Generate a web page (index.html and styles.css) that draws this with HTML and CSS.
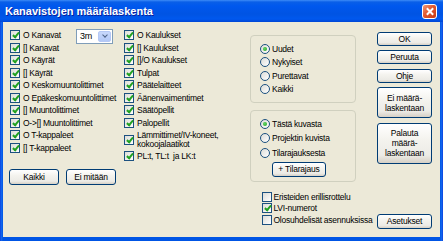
FILE: index.html
```html
<!DOCTYPE html>
<html lang="fi">
<head>
    <meta charset="UTF-8">
    <title>Kanavistojen määrälaskenta</title>
    <link rel="stylesheet" href="styles.css">
</head>
<body>
    <div class="window">
        <div class="titlebar">
            <span class="title">Kanavistojen määrälaskenta</span>
            <span class="close"></span>
        </div>
        <div class="client">
            <!-- left column: fittings -->
            <div class="col-left">
                <div class="list">
                    <div class="row">
                        <span class="lbl-fixed"><span class="box on"></span>O Kanavat</span>
                        <div class="combo"><span class="combo-text">3m</span><span class="drop"></span></div>
                    </div>
                    <div class="row"><span class="box on"></span>[] Kanavat</div>
                    <div class="row"><span class="box on"></span>O Käyrät</div>
                    <div class="row"><span class="box on"></span>[] Käyrät</div>
                    <div class="row"><span class="box on"></span>O Keskomuuntolittimet</div>
                    <div class="row"><span class="box on"></span>O Epäkeskomuuntolittimet</div>
                    <div class="row"><span class="box on"></span>[] Muuntolittimet</div>
                    <div class="row"><span class="box on"></span>O-&gt;[] Muuntolittimet</div>
                    <div class="row"><span class="box on"></span>O T-kappaleet</div>
                    <div class="row"><span class="box on"></span>[] T-kappaleet</div>
                </div>
                <div class="btnrow">
                    <button class="xp small">Kaikki</button>
                    <button class="xp small">Ei mitään</button>
                </div>
            </div>

            <!-- middle column: collars and terminals -->
            <div class="col-mid">
                <div class="row"><span class="box on"></span>O Kaulukset</div>
                <div class="row"><span class="box on"></span>[] Kaulukset</div>
                <div class="row"><span class="box on"></span>[]/O Kaulukset</div>
                <div class="row"><span class="box on"></span>Tulpat</div>
                <div class="row"><span class="box on"></span>Päätelaitteet</div>
                <div class="row"><span class="box on"></span>Äänenvaimentimet</div>
                <div class="row"><span class="box on"></span>Säätöpellit</div>
                <div class="row"><span class="box on"></span>Palopellit</div>
                <div class="row two"><span class="box on"></span><span>Lämmittimet/IV-koneet,<br>kokoojalaatikot</span></div>
                <div class="row"><span class="box on"></span>PL:t, TL:t &nbsp;ja LK:t</div>
            </div>

            <!-- options -->
            <div class="col-groups">
                <div class="group g1">
                    <div class="rrow"><span class="radio on"></span>Uudet</div>
                    <div class="rrow"><span class="radio"></span>Nykyiset</div>
                    <div class="rrow"><span class="radio"></span>Purettavat</div>
                    <div class="rrow"><span class="radio"></span>Kaikki</div>
                </div>
                <div class="group g2">
                    <div class="rrow"><span class="radio on"></span>Tästä kuvasta</div>
                    <div class="rrow"><span class="radio"></span>Projektin kuvista</div>
                    <div class="rrow"><span class="radio"></span>Tilarajauksesta</div>
                    <button class="xp tila">+ Tilarajaus</button>
                </div>
                <div class="checks">
                    <div class="crow"><span class="box"></span>Eristeiden erillisrottelu</div>
                    <div class="crow"><span class="box on"></span>LVI-numerot</div>
                    <div class="crow"><span class="box"></span>Olosuhdelisät asennuksissa</div>
                </div>
            </div>

            <!-- dialog buttons -->
            <div class="col-btns">
                <button class="xp b-ok">OK</button>
                <button class="xp b-one">Peruuta</button>
                <button class="xp b-one">Ohje</button>
                <button class="xp b-two">Ei määrä-<br>laskentaan</button>
                <button class="xp b-three">Palauta<br>määrä-<br>laskentaan</button>
                <button class="xp b-set">Asetukset</button>
            </div>
        </div>
    </div>
</body>
</html>
```

FILE: styles.css
```css
body {
    margin: 0;
    font-family: "Liberation Sans", Arial, sans-serif;
    font-size: 8.5px;
    letter-spacing: -0.25px;
    color: #000;
    background: #fff;
}

.window {
    width: 443px;
    height: 241px;
    display: flex;
    flex-direction: column;
    background: linear-gradient(to right, #0831d9 0, #166aee 1px, #0055e5 3px, #0055e5 440px, #166aee 442px, #0831d9 443px);
}

.titlebar {
    height: 22px;
    flex: none;
    display: flex;
    align-items: center;
    justify-content: space-between;
    padding: 0 6px 0 5px;
    background: linear-gradient(to bottom, #3d8cf7 0, #0a5fe8 2px, #0058ee 6px, #0054e3 14px, #0058ee 19px, #0046d5 22px);
}

.title {
    color: #fff;
    font-weight: bold;
    font-size: 11px;
    letter-spacing: 0;
    text-shadow: 1px 1px 0 #0a1f9c;
}

.close {
    width: 15px;
    height: 15px;
    box-sizing: border-box;
    border: 1px solid #fff;
    border-radius: 3px;
    background: linear-gradient(135deg, #f09a7a 0, #e2582f 45%, #c23a14 100%);
    position: relative;
}

.close::before,
.close::after {
    content: "";
    position: absolute;
    left: 5.5px;
    top: 2px;
    width: 2px;
    height: 9px;
    background: #fff;
    transform: rotate(45deg);
}

.close::after {
    transform: rotate(-45deg);
}

.client {
    flex: 1;
    margin: 0 3px 4px;
    background: #ece9d8;
    display: flex;
    padding: 7px 8px 8px 7px;
    box-sizing: border-box;
}

/* checkbox rows */
.col-left {
    width: 114px;
    flex: none;
    display: flex;
    flex-direction: column;
}

.col-mid {
    width: 126px;
    flex: none;
}

.row {
    height: 12.5px;
    display: flex;
    align-items: center;
    gap: 3px;
    white-space: nowrap;
}

.row.two {
    height: 21px;
    line-height: 9px;
}

.lbl-fixed {
    width: 63px;
    display: flex;
    align-items: center;
    gap: 3px;
}

.box {
    width: 10px;
    height: 10px;
    flex: none;
    box-sizing: border-box;
    border: 1px solid #1c5180;
    background: linear-gradient(135deg, #dcdcd7, #fff);
    position: relative;
}

.box.on::after {
    content: "";
    position: absolute;
    left: 2.5px;
    top: 0;
    width: 2px;
    height: 5px;
    border: solid #21a121;
    border-width: 0 2px 2px 0;
    transform: rotate(40deg);
}

.combo {
    width: 37px;
    height: 15px;
    margin-top: 2px;
    box-sizing: border-box;
    border: 1px solid #7f9db9;
    background: #fff;
    display: flex;
    align-items: center;
    justify-content: space-between;
    padding: 1px 1px 1px 3px;
    font-size: 9px;
}

.drop {
    width: 13px;
    height: 11px;
    border-radius: 2px;
    background: linear-gradient(#c8d8fb, #b2c8f6);
    border: 1px solid #b5c8f5;
    box-sizing: border-box;
    position: relative;
}

.drop::after {
    content: "";
    position: absolute;
    left: 3.5px;
    top: 1.5px;
    width: 3px;
    height: 3px;
    border: solid #4d6185;
    border-width: 0 1.5px 1.5px 0;
    transform: rotate(45deg);
}

.btnrow {
    display: flex;
    gap: 7px;
    margin: 15px 0 0 -1px;
}

/* xp buttons */
.xp {
    font-family: inherit;
    font-size: 8.5px;
    letter-spacing: -0.2px;
    color: #000;
    border: 1px solid #003c74;
    border-radius: 3px;
    background: linear-gradient(#fff 0, #f4f3ee 40%, #ecebe6 80%, #d6d0c5 100%);
    padding: 0;
    line-height: 10px;
    box-sizing: border-box;
}

.xp.small {
    width: 50px;
    height: 16px;
}

/* options column */
.col-groups {
    width: 106px;
    flex: none;
    display: flex;
    flex-direction: column;
}

.group {
    border: 1px solid #d0d0bf;
    border-radius: 4px;
    box-sizing: border-box;
}

.g1 {
    margin-top: 6px;
    height: 68px;
    padding: 6.3px 0 0 9px;
}

.g1 .rrow {
    height: 13.3px;
}

.g2 {
    margin-top: 7px;
    height: 72px;
    padding: 5.7px 0 0 9px;
}

.g2 .rrow {
    height: 14.5px;
}

.rrow {
    display: flex;
    align-items: center;
    gap: 2px;
    white-space: nowrap;
}

.radio {
    width: 10px;
    height: 10px;
    flex: none;
    box-sizing: border-box;
    border: 1px solid #1c5180;
    border-radius: 50%;
    background: linear-gradient(135deg, #dcdcd7, #fff);
    position: relative;
}

.radio.on::after {
    content: "";
    position: absolute;
    left: 2px;
    top: 2px;
    width: 4px;
    height: 4px;
    border-radius: 50%;
    background: radial-gradient(circle at 40% 40%, #62d562, #21a121);
}

.xp.tila {
    width: 54px;
    height: 15px;
    margin: 1.7px 0 0 12px;
}

.checks {
    margin-top: 9px;
    padding-left: 12px;
}

.crow {
    height: 11.6px;
    display: flex;
    align-items: center;
    gap: 1.5px;
    white-space: nowrap;
}

/* right column buttons */
.col-btns {
    width: 55px;
    flex: none;
    margin-left: 21px;
    padding-top: 2.5px;
    display: flex;
    flex-direction: column;
    gap: 4.5px;
}

.b-ok,
.b-one {
    height: 14px;
}

.b-two {
    height: 31px;
}

.b-three {
    height: 41px;
}

.b-set {
    height: 15.5px;
    margin-top: auto;
}
```
